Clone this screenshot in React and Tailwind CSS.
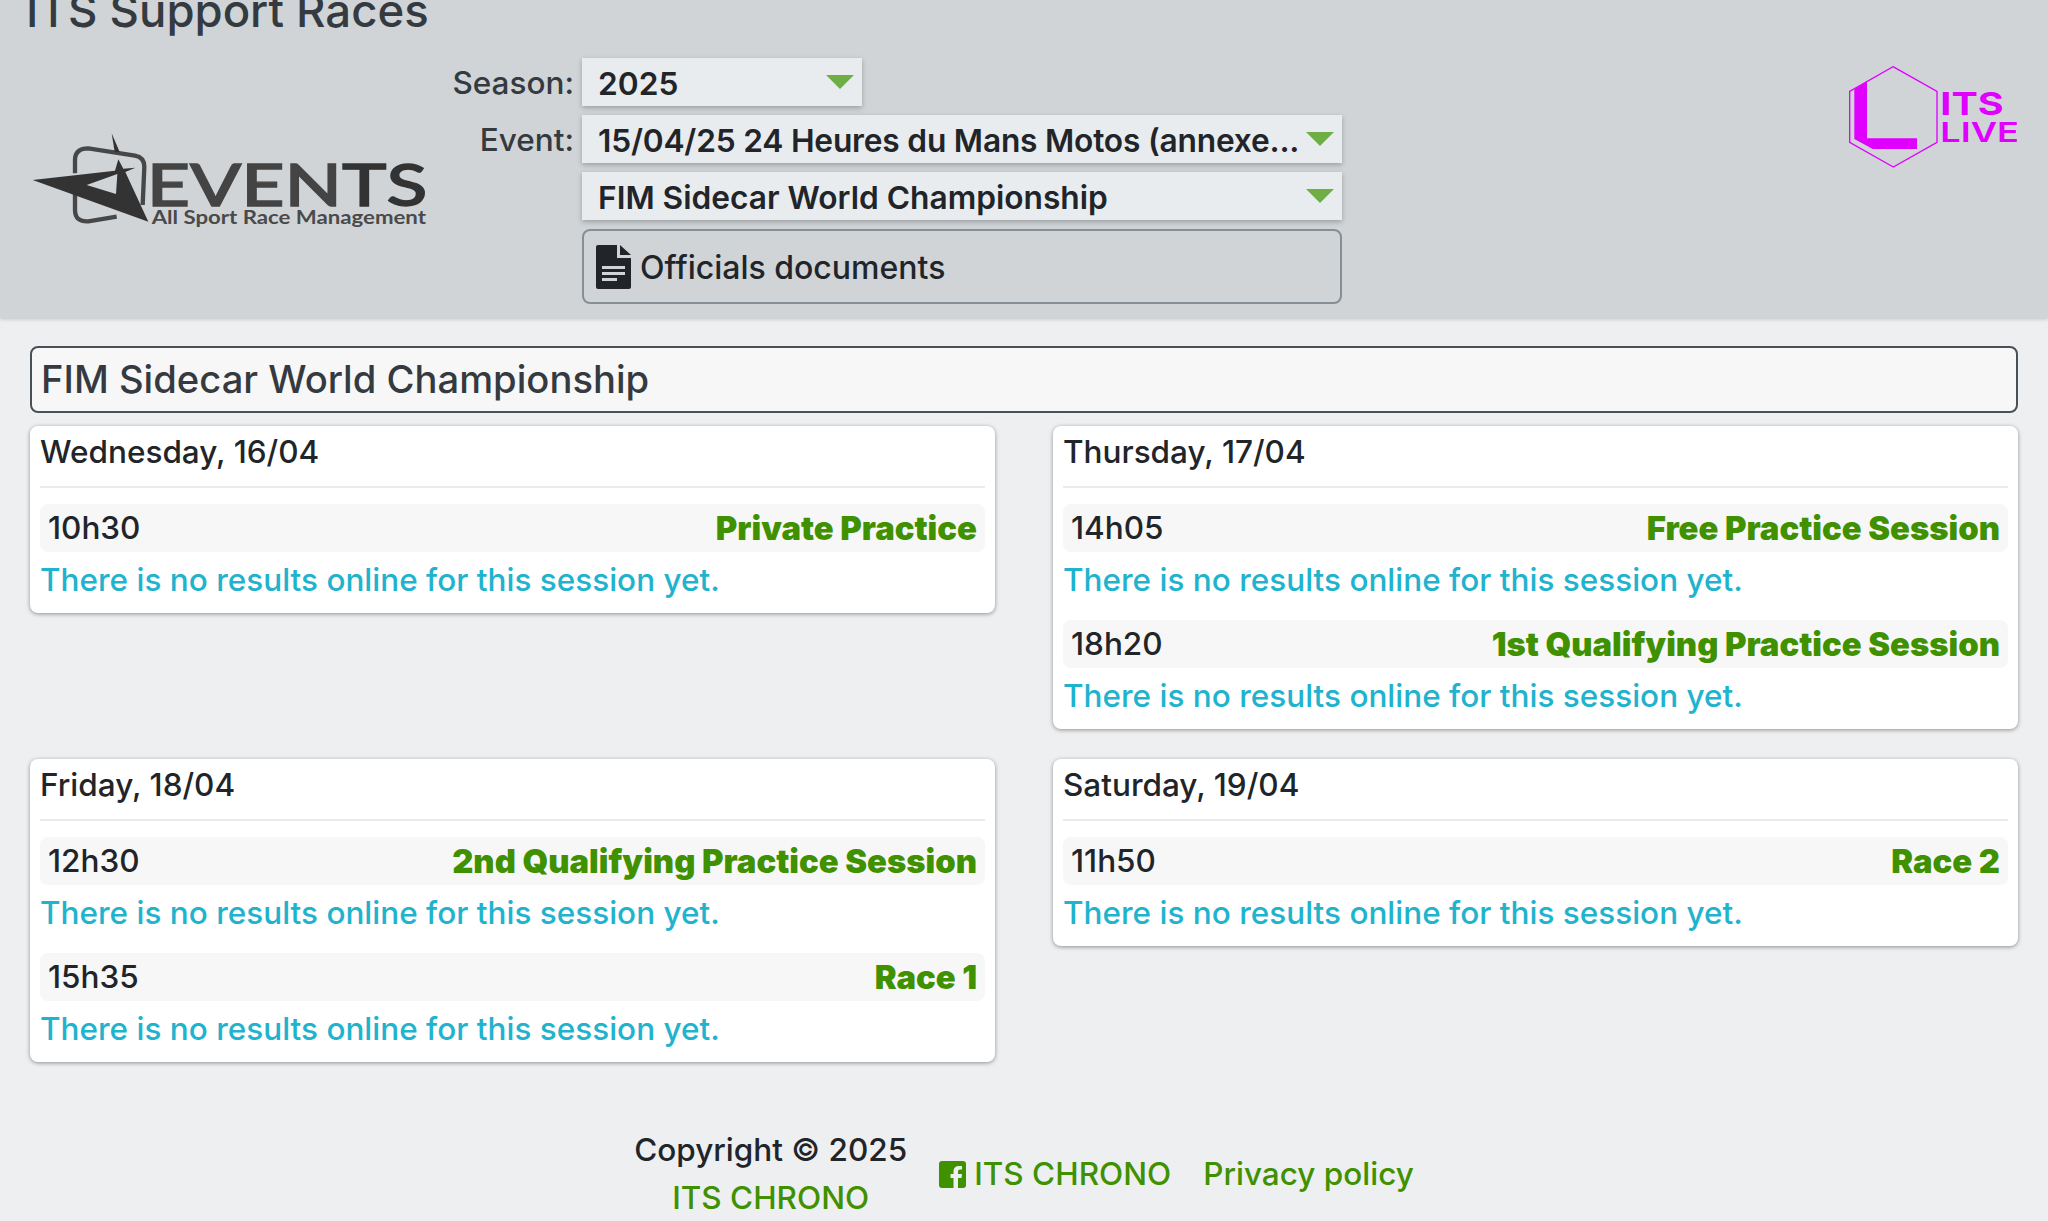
const days = [
    { date: 'Wednesday, 16/04', sessions: [{ time: '10h30', name: 'Private Practice' }] },
    {
        date: 'Thursday, 17/04',
        sessions: [
            { time: '14h05', name: 'Free Practice Session' },
            { time: '18h20', name: '1st Qualifying Practice Session' },
        ],
    },
    {
        date: 'Friday, 18/04',
        sessions: [
            { time: '12h30', name: '2nd Qualifying Practice Session' },
            { time: '15h35', name: 'Race 1' },
        ],
    },
    { date: 'Saturday, 19/04', sessions: [{ time: '11h50', name: 'Race 2' }] },
];

function EventsLogo() {
    return (
        <svg width="420" height="120" viewBox="0 0 1260 360" className="block">
            <path
                d="M165 160 V120 Q165 85 205 85 L345 107 Q373 112 373 140 L368 255 M165 215 V270 Q165 306 205 304 L290 290"
                fill="none"
                stroke="#474747"
                strokeWidth="13"
            />
            <path d="M275 40 L299 96 L284 96 Z" fill="#333333" />
            <path
                fillRule="evenodd"
                d="M38 180 L285 152 L295 118 L310 146 L346 143 L316 156 L385 305 Z M200 195 L288 222 L292 162 Z"
                fill="#333333"
            />
            <text
                x="380"
                y="258"
                fontFamily="Lato, sans-serif"
                fontSize="172"
                textLength="842"
                lengthAdjust="spacingAndGlyphs"
                fill="#444444"
                stroke="#444444"
                strokeWidth="4"
            >
                EVEN<tspan fill="#333333" stroke="#333333">TS</tspan>
            </text>
            <text
                x="395"
                y="312"
                fontFamily="Lato, sans-serif"
                fontWeight="700"
                fontSize="58"
                textLength="823"
                lengthAdjust="spacingAndGlyphs"
                fill="#4a4a4a"
            >
                All Sport Race Management
            </text>
        </svg>
    );
}

function LiveLogo() {
    return (
        <svg width="248" height="150" viewBox="0 0 744 450" className="block">
            <path d="M279 80 L411 154 V307 L280 381 L149 307 V154 Z" fill="none" stroke="#e000ff" strokeWidth="4" />
            <path d="M163 148 L201 125 V295 H351 V327 H218 L163 297 Z" fill="#e000ff" />
            <text
                x="421"
                y="226"
                fontFamily="Inter, sans-serif"
                fontWeight="700"
                fontSize="94"
                textLength="190"
                lengthAdjust="spacingAndGlyphs"
                fill="#e000ff"
            >
                ITS
            </text>
            <text
                x="421"
                y="305"
                fontFamily="Inter, sans-serif"
                fontWeight="600"
                fontSize="82"
                textLength="236"
                lengthAdjust="spacingAndGlyphs"
                fill="#e000ff"
            >
                LIVE
            </text>
        </svg>
    );
}

function SelectBox({ children, className }) {
    return (
        <div className={`relative flex h-12 items-center bg-[#e9ecef] pl-4 pr-[36px] text-[31.7px] font-semibold text-[#212529] shadow-[0_2px_5px_rgba(0,0,0,0.25)] ${className}`}>
            <span className="truncate pt-[3px]">{children}</span>
            <span className="absolute right-2 top-[17px] h-0 w-0 border-x-[14px] border-t-[14px] border-x-transparent border-t-[#6fae45]" />
        </div>
    );
}

function DayCard({ day }) {
    return (
        <div className="rounded-lg bg-white px-[10px] pb-[11px] shadow-[0_1px_4px_rgba(0,0,0,0.4)]">
            <div className="flex h-[62px] items-center border-b-2 border-[#e9ecef] pb-[8px] text-[#212529]">{day.date}</div>
            <div className="mt-4 flex flex-col gap-[18px]">
                {day.sessions.map((s) => (
                    <div key={s.time}>
                        <div className="flex h-12 items-center justify-between rounded-lg bg-[#f7f7f8] px-2">
                            <span className="text-[#212529]">{s.time}</span>
                            <span className="text-[32.8px] font-black text-[#3f9100]">{s.name}</span>
                        </div>
                        <div className="mt-[6px] flex h-11 items-center text-[#1fb3ce]">
                            There is no results online for this session yet.
                        </div>
                    </div>
                ))}
            </div>
        </div>
    );
}

export default function App() {
    return (
        <div className="h-[1221px] overflow-hidden bg-[#edeff1] text-[31.5px] leading-[48px] font-medium text-[#212529] [font-family:Inter,sans-serif]">
            <header className="relative flex h-[318px] flex-col bg-[#d0d4d7] shadow-[0_1px_4px_rgba(0,0,0,0.2)]">
                <h1 className="-mt-[14px] pl-[26px] text-[45.5px] font-medium leading-[50px] text-[#343a40]">ITS Support Races</h1>
                <div className="mt-[22px] flex">
                    <div className="ml-[20px] mt-[62px] w-[420px]">
                        <EventsLogo />
                    </div>
                    <div className="ml-[22px] grid grid-cols-[118px_760px] gap-x-[2px] gap-y-[9px]">
                        <span className="flex h-12 items-center justify-end pr-[6px] pt-[2px] text-[#343a40]">Season:</span>
                        <SelectBox className="w-[280px]">2025</SelectBox>
                        <span className="flex h-12 items-center justify-end pr-[6px] pt-[2px] text-[#343a40]">Event:</span>
                        <SelectBox className="tracking-[-0.2px]">15/04/25 24 Heures du Mans Motos (annexe...</SelectBox>
                        <span />
                        <SelectBox>FIM Sidecar World Championship</SelectBox>
                        <span />
                        <div className="flex h-[75px] items-center gap-[9px] rounded-lg border-2 border-[#868e96] px-[12px]">
                            <svg width="35" height="44" viewBox="0 0 35 44">
                                <path
                                    fillRule="evenodd"
                                    d="M2 0 H21 V13 H35 V42 Q35 44 33 44 H2 Q0 44 0 42 V2 Q0 0 2 0 Z M6 21 H29 V24 H6 Z M6 27 H29 V30 H6 Z M6 33 H21 V36 H6 Z"
                                    fill="#212529"
                                />
                                <path d="M24 0 L35 10 H24 Z" fill="#212529" />
                            </svg>
                            <span className="pt-[2px] text-[32px]">Officials documents</span>
                        </div>
                    </div>
                </div>
                <div className="absolute right-0 top-[40px]">
                    <LiveLogo />
                </div>
            </header>

            <main className="px-[30px]">
                <div className="mt-[28px] flex h-[67px] items-center rounded-lg border-2 border-[#495057] bg-[#f7f7f8] px-[9px] pb-[2px] text-[38.2px] font-medium text-[#343a40]">
                    FIM Sidecar World Championship
                </div>
                <div className="mt-[13px] grid grid-cols-[965px_965px] items-start gap-x-[58px] gap-y-[30px]">
                    {days.map((day) => (
                        <DayCard key={day.date} day={day} />
                    ))}
                </div>
            </main>

            <footer className="mt-[64px] flex items-center justify-center gap-[32px]">
                <div className="text-center">
                    <div>Copyright © 2025</div>
                    <div className="text-[#3f9100]">ITS CHRONO</div>
                </div>
                <div className="flex items-center gap-2 text-[#3f9100]">
                    <svg width="27" height="27" viewBox="0 0 27 27">
                        <path
                            d="M3 0H24Q27 0 27 3V24Q27 27 24 27H19V17H22.5L23 13H19V10.5Q19 8.5 21 8.5H23V5H20Q14.5 5 14.5 10.5V13H11.5V17H14.5V27H3Q0 27 0 24V3Q0 0 3 0Z"
                            fill="#3f9100"
                        />
                    </svg>
                    ITS CHRONO
                </div>
                <div className="text-[#3f9100]">Privacy policy</div>
            </footer>
        </div>
    );
}
